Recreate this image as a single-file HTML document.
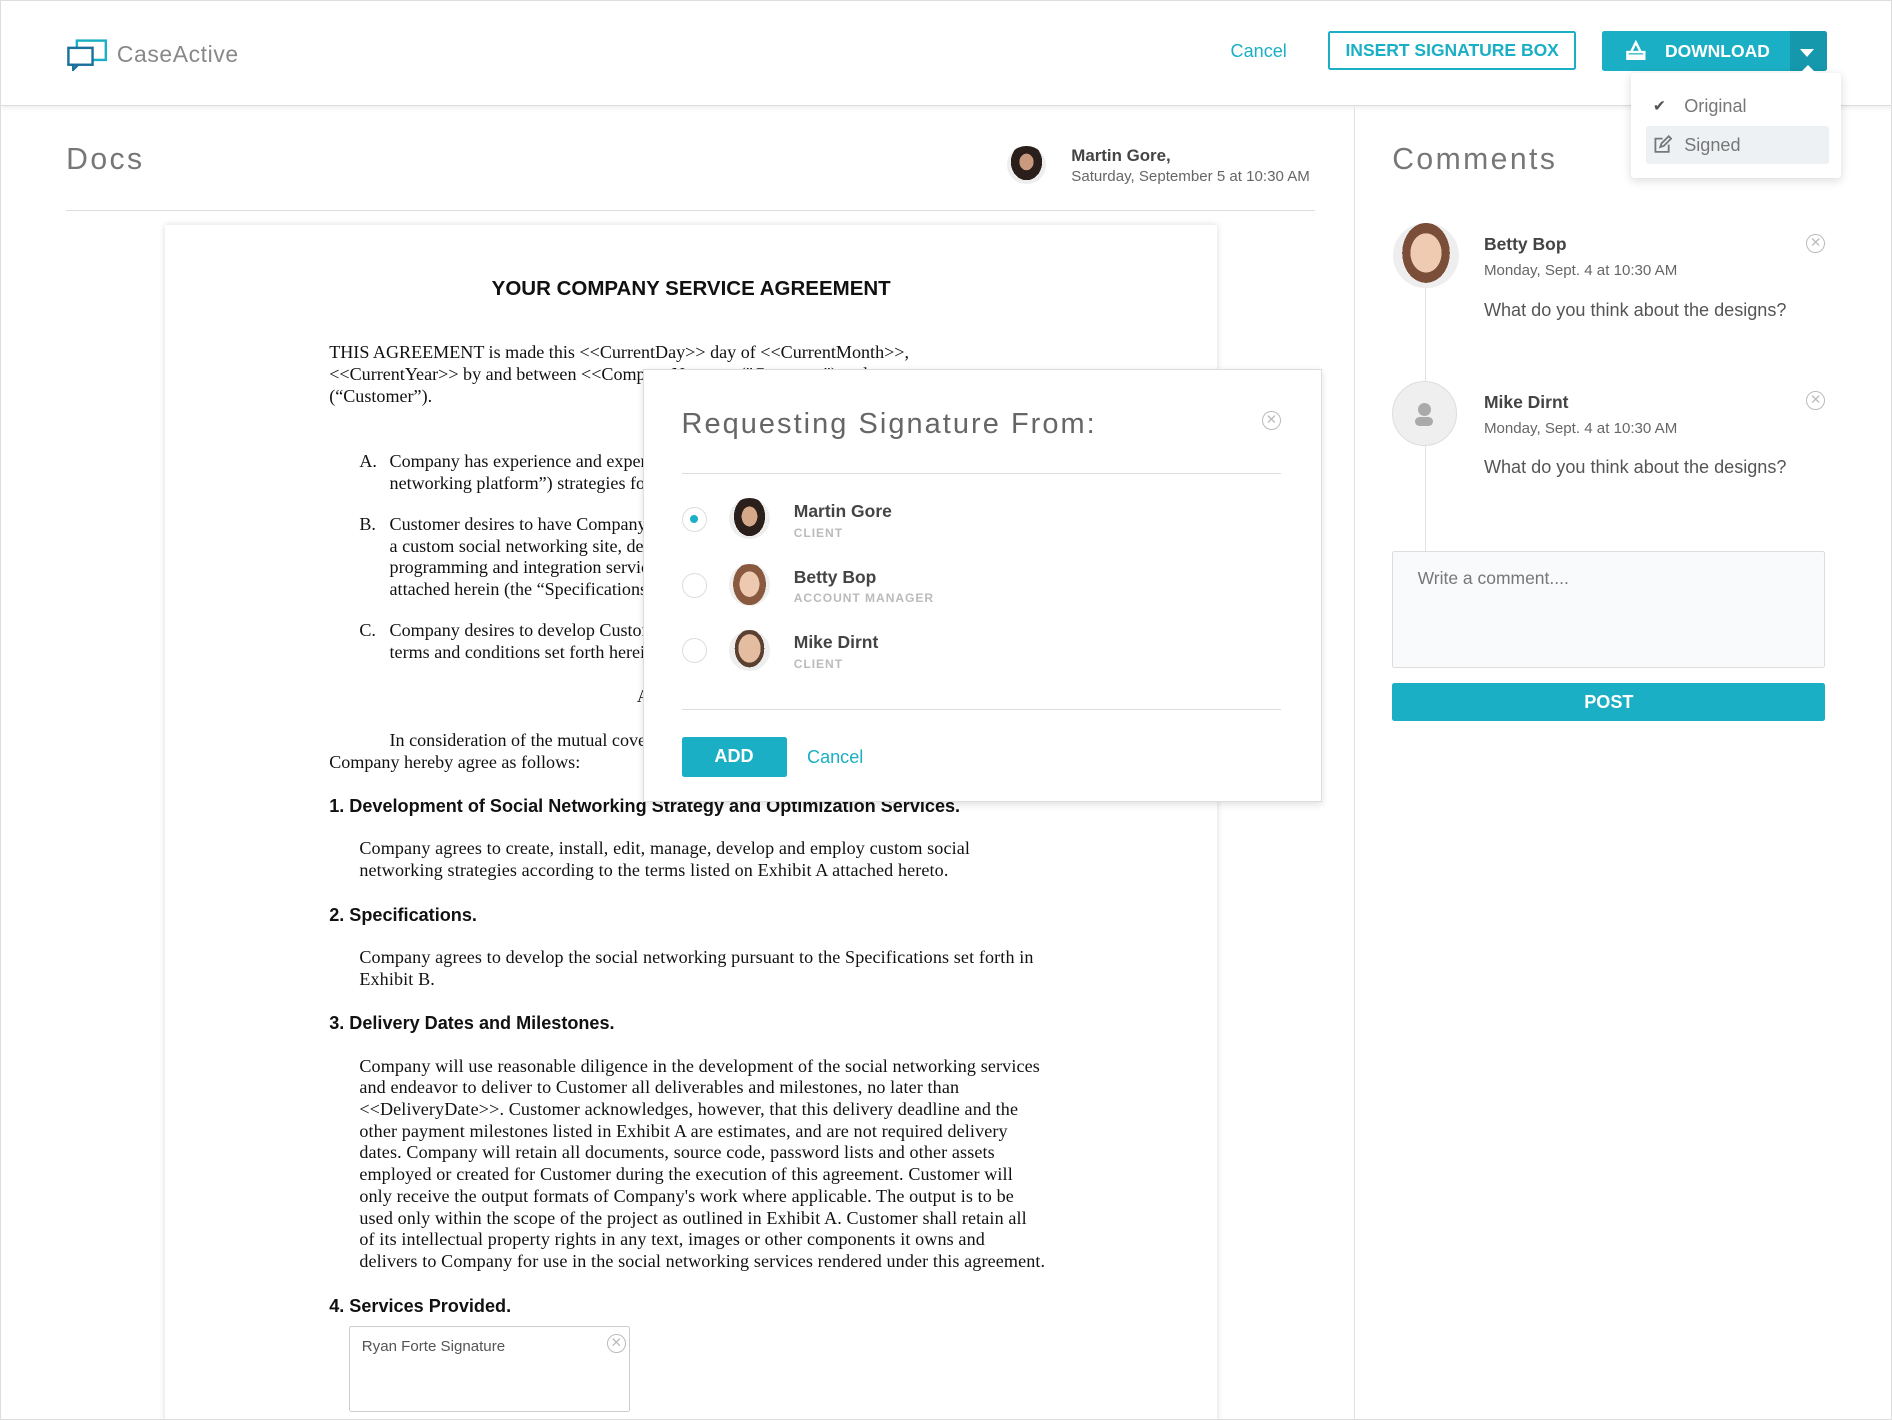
<!DOCTYPE html>
<html><head><meta charset="utf-8">
<style>
html,body{margin:0;padding:0;background:#fff;overflow:hidden}
#w{position:relative;width:1568px;height:1177px;zoom:1.20663;font-family:"Liberation Sans",sans-serif;color:#444;overflow:hidden;border:1px solid #ddd;box-sizing:border-box}
.a{position:absolute}
.t{color:#1aafc4}
.serif{font-family:"Liberation Serif",serif;font-size:15px;line-height:18px;color:#111}
.h{font-weight:bold;font-size:15px;color:#111}
.av{border-radius:50%;overflow:hidden}
.xc{width:14px;height:14px;border:1.5px solid #bbb;border-radius:50%;color:#bbb;font-size:11px;line-height:14px;text-align:center}
</style></head><body><div id="w">
<div class="a" style="left:0;top:0;width:1568px;height:86px;border-bottom:1px solid #ddd;box-shadow:0 2px 3px rgba(0,0,0,.06)"></div>
<svg class="a" style="left:54px;top:30px" width="36" height="28" viewBox="0 0 36 28"><rect x="9" y="3" width="24" height="16" fill="none" stroke="#1aafc4" stroke-width="2"/><rect x="2" y="9" width="20" height="14" fill="#fff" stroke="#1a6f9c" stroke-width="2"/><path d="M6 23 L6 27 L10 23" fill="none" stroke="#1a6f9c" stroke-width="2"/></svg>
<div class="a" style="left:96px;top:33px;font-size:19px;color:#888;letter-spacing:.5px">CaseActive</div>
<div class="a t" style="left:1019px;top:33px;font-size:15px">Cancel</div>
<div class="a t" style="left:1100px;top:25px;width:202px;height:29px;border:2px solid #1aafc4;border-radius:2px;font-weight:bold;font-size:14.5px;line-height:29px;text-align:center">INSERT SIGNATURE BOX</div>
<div class="a" style="left:1327px;top:25px;width:156px;height:33px;background:#1aafc4;border-radius:2px 0 0 2px"></div>
<div class="a" style="left:1483px;top:25px;width:30px;height:33px;background:#1598ac;border-radius:0 2px 2px 0"></div>
<svg class="a" style="left:1346px;top:32px" width="18" height="17" viewBox="0 0 18 17"><path d="M2 10 V16 H16 V10 Z M5 10 L9 2 L13 10" fill="none" stroke="#fff" stroke-width="2"/><rect x="2" y="12" width="14" height="4" fill="#fff"/></svg>
<div class="a" style="left:1379px;top:33px;font-size:14.5px;font-weight:bold;color:#fff">DOWNLOAD</div>
<div class="a" style="left:1491px;top:40px;width:0;height:0;border-left:6px solid transparent;border-right:6px solid transparent;border-top:7px solid #fff"></div>
<div class="a" style="left:1351px;top:60px;width:174px;height:87px;background:#fff;border-radius:3px;box-shadow:0 2px 8px rgba(0,0,0,.15)"></div>
<div class="a" style="left:1491px;top:53px;width:0;height:0;border-left:7px solid transparent;border-right:7px solid transparent;border-bottom:7px solid #fff"></div>
<div class="a" style="left:1369px;top:79px;font-size:13px;color:#555">✔</div>
<div class="a" style="left:1395px;top:79px;font-size:15px;color:#777">Original</div>
<div class="a" style="left:1363px;top:104px;width:152px;height:31px;background:#eef1f4;border-radius:2px"></div>
<svg class="a" style="left:1369px;top:111px" width="16" height="16" viewBox="0 0 16 16"><path d="M8 3 H2 V14 H13 V8" fill="none" stroke="#777" stroke-width="1.5"/><path d="M6 10 L7 7 L13 1 L15 3 L9 9 Z" fill="none" stroke="#777" stroke-width="1.5"/></svg>
<div class="a" style="left:1395px;top:111px;font-size:15px;color:#777">Signed</div>
<div class="a" style="left:1121px;top:87px;width:1px;height:1090px;background:#e2e2e2"></div>
<div class="a" style="left:54px;top:118px;font-size:25px;color:#777;letter-spacing:2px;font-weight:300">Docs</div>
<div class="a av" style="left:834px;top:120px;width:32px;height:32px;background:radial-gradient(ellipse 40% 48% at 50% 42%,#c99a7d 0 45%,#2a1f1a 46% 100%,#eee 100%),#eee"></div>
<div class="a" style="left:887px;top:120px;font-size:14px;font-weight:bold;color:#444">Martin Gore,</div>
<div class="a" style="left:887px;top:138px;font-size:12.5px;color:#666">Saturday, September 5 at 10:30 AM</div>
<div class="a" style="left:54px;top:173px;width:1035px;height:1px;background:#ddd"></div>
<div class="a" style="left:136px;top:186px;width:872px;height:1000px;background:#fff;box-shadow:0 0 5px rgba(0,0,0,.15)"></div>
<div class="a" style="left:136px;top:229px;width:872px;text-align:center;font-weight:bold;font-size:17px;color:#111">YOUR COMPANY SERVICE AGREEMENT</div>
<div class="a serif" style="left:272px;top:283px;white-space:nowrap">THIS AGREEMENT is made this &lt;&lt;CurrentDay&gt;&gt; day of &lt;&lt;CurrentMonth&gt;&gt;,<br>&lt;&lt;CurrentYear&gt;&gt; by and between &lt;&lt;CompanyName&gt;&gt; ("Company") and<br>(“Customer”).</div>
<div class="a serif" style="left:297px;top:373px">A.</div>
<div class="a serif" style="left:322px;top:373px;white-space:nowrap">Company has experience and expertise in creating social networking strategies<br>networking platform”) strategies for its clients.</div>
<div class="a serif" style="left:297px;top:425px">B.</div>
<div class="a serif" style="left:322px;top:425px;white-space:nowrap">Customer desires to have Company develop and implement<br>a custom social networking site, development of<br>programming and integration services as described<br>attached herein (the “Specifications”).</div>
<div class="a serif" style="left:297px;top:513px">C.</div>
<div class="a serif" style="left:322px;top:513px;white-space:nowrap">Company desires to develop Customer’s site under the<br>terms and conditions set forth herein.</div>
<div class="a serif" style="left:527px;top:568px">AGREEMENT</div>
<div class="a serif" style="left:322px;top:604px;white-space:nowrap">In consideration of the mutual covenants contained herein, Customer and</div>
<div class="a serif" style="left:272px;top:622px;white-space:nowrap">Company hereby agree as follows:</div>
<div class="a h" style="left:272px;top:659px">1. Development of Social Networking Strategy and Optimization Services.</div>
<div class="a serif" style="left:297px;top:694px;white-space:nowrap;letter-spacing:.1px">Company agrees to create, install, edit, manage, develop and employ custom social<br>networking strategies according to the terms listed on Exhibit A attached hereto.</div>
<div class="a h" style="left:272px;top:749px">2. Specifications.</div>
<div class="a serif" style="left:297px;top:784px;white-space:nowrap;letter-spacing:.1px">Company agrees to develop the social networking pursuant to the Specifications set forth in<br>Exhibit B.</div>
<div class="a h" style="left:272px;top:839px">3. Delivery Dates and Milestones.</div>
<div class="a serif" style="left:297px;top:874px;white-space:nowrap;letter-spacing:.1px">Company will use reasonable diligence in the development of the social networking services<br>and endeavor to deliver to Customer all deliverables and milestones, no later than<br>&lt;&lt;DeliveryDate&gt;&gt;. Customer acknowledges, however, that this delivery deadline and the<br>other payment milestones listed in Exhibit A are estimates, and are not required delivery<br>dates. Company will retain all documents, source code, password lists and other assets<br>employed or created for Customer during the execution of this agreement. Customer will<br>only receive the output formats of Company's work where applicable. The output is to be<br>used only within the scope of the project as outlined in Exhibit A. Customer shall retain all<br>of its intellectual property rights in any text, images or other components it owns and<br>delivers to Company for use in the social networking services rendered under this agreement.</div>
<div class="a h" style="left:272px;top:1073px">4. Services Provided.</div>
<div class="a" style="left:288px;top:1098px;width:232px;height:70px;border:1px solid #ccc;border-radius:2px"></div>
<div class="a" style="left:299px;top:1108px;font-size:12.5px;color:#555">Ryan Forte Signature</div>
<div class="a xc" style="left:502px;top:1105px">✕</div>
<div class="a" style="left:532px;top:305px;width:561px;height:357px;background:#fff;border:1px solid #ddd;box-shadow:0 2px 6px rgba(0,0,0,.12)"></div>
<div class="a" style="left:564px;top:337px;font-size:24px;color:#666;letter-spacing:1.7px;font-weight:300">Requesting Signature From:</div>
<div class="a xc" style="left:1045px;top:340px">✕</div>
<div class="a" style="left:564px;top:391px;width:497px;height:1px;background:#ddd"></div>
<div class="a" style="left:564px;top:587px;width:497px;height:1px;background:#ddd"></div>
<div class="a" style="left:564px;top:419px;width:21px;height:21px;border:1px solid #ddd;border-radius:50%;box-sizing:border-box"></div>
<div class="a" style="left:571px;top:426px;width:7px;height:7px;background:#1aafc4;border-radius:50%"></div>
<div class="a" style="left:564px;top:474px;width:21px;height:21px;border:1px solid #ddd;border-radius:50%;box-sizing:border-box"></div>
<div class="a" style="left:564px;top:528px;width:21px;height:21px;border:1px solid #ddd;border-radius:50%;box-sizing:border-box"></div>
<div class="a av" style="left:603px;top:412px;width:34px;height:34px;background:radial-gradient(ellipse 38% 48% at 50% 45%,#d6a88a 0 50%,#2a1f1a 51% 100%,#eee 100%),#eee"></div>
<div class="a av" style="left:603px;top:467px;width:34px;height:34px;background:radial-gradient(ellipse 40% 50% at 50% 48%,#edc9b0 0 60%,#8a5a40 61% 100%,#eee 100%),#eee"></div>
<div class="a av" style="left:603px;top:521px;width:34px;height:34px;background:radial-gradient(ellipse 36% 46% at 50% 45%,#e4bca0 0 75%,#5a4030 76% 100%,#eee 100%),#eee"></div>
<div class="a" style="left:657px;top:414px;font-size:14.5px;font-weight:bold;color:#444">Martin Gore</div>
<div class="a" style="left:657px;top:435px;font-size:10px;font-weight:bold;color:#bbb;letter-spacing:.8px">CLIENT</div>
<div class="a" style="left:657px;top:469px;font-size:14.5px;font-weight:bold;color:#444">Betty Bop</div>
<div class="a" style="left:657px;top:489px;font-size:10px;font-weight:bold;color:#bbb;letter-spacing:.8px">ACCOUNT MANAGER</div>
<div class="a" style="left:657px;top:523px;font-size:14.5px;font-weight:bold;color:#444">Mike Dirnt</div>
<div class="a" style="left:657px;top:544px;font-size:10px;font-weight:bold;color:#bbb;letter-spacing:.8px">CLIENT</div>
<div class="a" style="left:564px;top:610px;width:87px;height:33px;background:#1aafc4;border-radius:2px;color:#fff;font-weight:bold;font-size:15px;line-height:33px;text-align:center">ADD</div>
<div class="a t" style="left:668px;top:618px;font-size:15px">Cancel</div>
<div class="a" style="left:1153px;top:118px;font-size:25px;color:#777;letter-spacing:2px;font-weight:300">Comments</div>
<div class="a" style="left:1180px;top:238px;width:1px;height:218px;background:#e2e2e2"></div>
<div class="a av" style="left:1154px;top:184px;width:54px;height:54px;background:radial-gradient(ellipse 36% 46% at 50% 46%,#efcbb2 0 65%,#7a4e38 66% 100%,#eee 100%),#eee"></div>
<div class="a" style="left:1229px;top:193px;font-size:14.5px;font-weight:bold;color:#444">Betty Bop</div>
<div class="a" style="left:1229px;top:216px;font-size:12.5px;color:#666">Monday, Sept. 4 at 10:30 AM</div>
<div class="a" style="left:1229px;top:248px;font-size:15px;color:#555">What do you think about the designs?</div>
<div class="a xc" style="left:1496px;top:193px">✕</div>
<div class="a av" style="left:1153px;top:315px;width:54px;height:54px;background:#efefef;border:1px solid #ddd;box-sizing:border-box"></div>
<div class="a" style="left:1174px;top:333px;width:11px;height:11px;background:#aaa;border-radius:50%"></div>
<div class="a" style="left:1172px;top:345px;width:15px;height:7px;background:#aaa;border-radius:6px"></div>
<div class="a" style="left:1229px;top:324px;font-size:14.5px;font-weight:bold;color:#444">Mike Dirnt</div>
<div class="a" style="left:1229px;top:347px;font-size:12.5px;color:#666">Monday, Sept. 4 at 10:30 AM</div>
<div class="a" style="left:1229px;top:378px;font-size:15px;color:#555">What do you think about the designs?</div>
<div class="a xc" style="left:1496px;top:323px">✕</div>
<div class="a" style="left:1153px;top:456px;width:359px;height:97px;background:#f9fafb;border:1px solid #ddd;border-radius:2px;box-sizing:border-box"></div>
<div class="a" style="left:1174px;top:470px;font-size:14.5px;color:#777">Write a comment....</div>
<div class="a" style="left:1153px;top:565px;width:359px;height:32px;background:#1aafc4;border-radius:2px;color:#fff;font-weight:bold;font-size:15px;line-height:32px;text-align:center">POST</div>
</div></body></html>
